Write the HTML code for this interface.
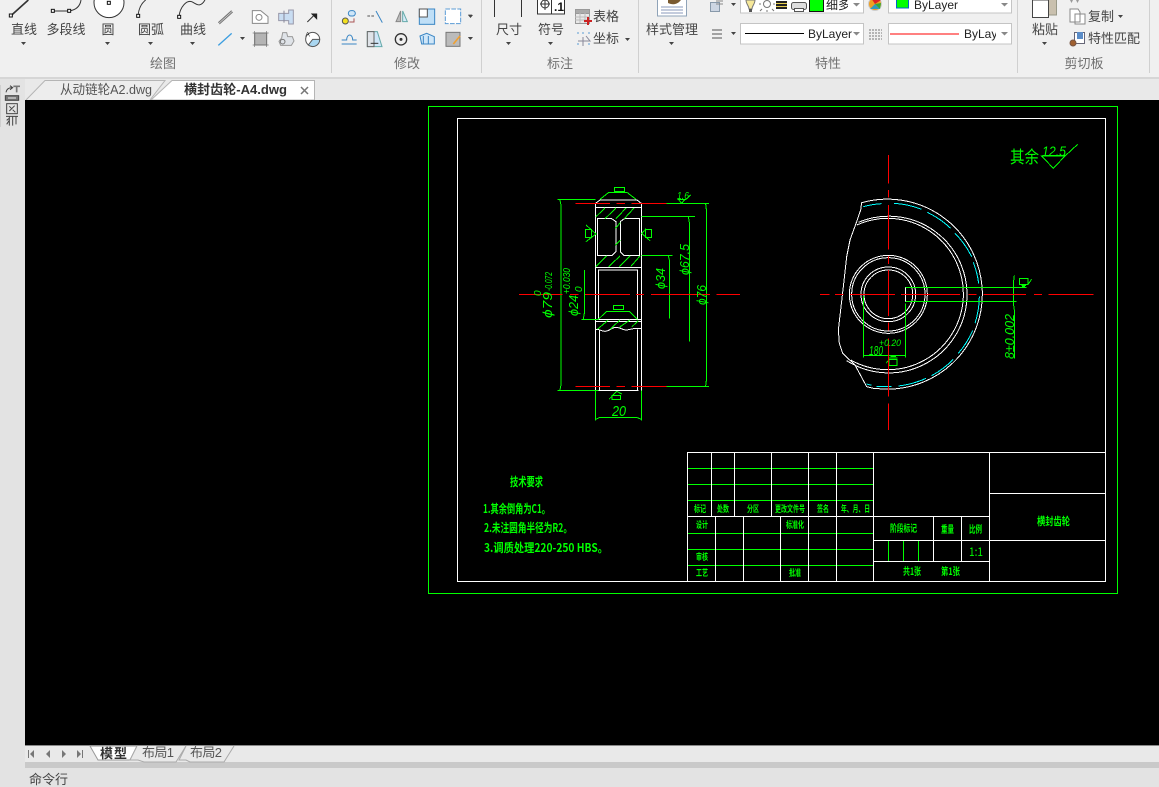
<!DOCTYPE html>
<html><head><meta charset="utf-8"><style>
html,body{margin:0;padding:0;width:1159px;height:787px;overflow:hidden;background:#e3e3e3}
svg{display:block}
text{font-family:"Liberation Sans","Noto Sans CJK SC",sans-serif}
.l{font-size:13px;fill:#444;text-anchor:middle}
.p{font-size:13px;fill:#707070;text-anchor:middle}
.c{font-size:12px;fill:#222}
.cad{font-size:9px;fill:#0f0;font-weight:bold;font-family:"Noto Sans CJK SC",sans-serif}
.t{font-size:12px;fill:#0f0;font-weight:bold;font-family:"Noto Sans CJK SC","Liberation Sans",sans-serif}
.d{font-size:13px;fill:#0f0;font-style:italic}
</style></head><body>
<svg width="1159" height="787" viewBox="0 0 1159 787" xmlns="http://www.w3.org/2000/svg">
<rect width="1159" height="787" fill="#e3e3e3"/>
<!-- ribbon -->
<rect width="1159" height="77" fill="#f0f0f0"/>
<rect y="77" width="1159" height="2" fill="#d6d6d6"/>
<rect x="25" y="79" width="1134" height="21" fill="#e9e9e9"/>
<g fill="#d0d0d0"><rect x="331" y="0" width="1" height="73"/><rect x="481" y="0" width="1" height="73"/><rect x="638" y="0" width="1" height="73"/><rect x="1017" y="0" width="1" height="73"/><rect x="1149" y="0" width="1" height="73"/></g>
<g>
<text class="l" x="24" y="34">直线</text><text class="l" x="66" y="34">多段线</text><text class="l" x="108" y="34">圆</text><text class="l" x="151" y="34">圆弧</text><text class="l" x="193" y="34">曲线</text>
<text class="l" x="509" y="34">尺寸</text><text class="l" x="551" y="34">符号</text><text class="l" x="606" y="21">表格</text><text class="l" x="606" y="43">坐标</text><text class="l" x="672" y="34">样式管理</text>
<text class="l" x="1045" y="34">粘贴</text><text class="l" x="1101" y="21">复制</text><text class="l" x="1114" y="43">特性匹配</text>
<text class="p" x="163" y="68">绘图</text><text class="p" x="407" y="68">修改</text><text class="p" x="560" y="68">标注</text><text class="p" x="828" y="68">特性</text><text class="p" x="1084" y="68">剪切板</text>
</g>
<!-- small dropdown arrows -->
<g fill="#444">
<path d="M21 42h5l-2.500 3zM105 42h5l-2.500 3zM148 42h5l-2.500 3zM190 42h5l-2.500 3zM240 37h5l-2.500 3zM468 15h5l-2.500 3zM468 37h5l-2.500 3zM506 42h5l-2.500 3zM548 42h5l-2.500 3zM625 38h5l-2.500 3zM669 42h5l-2.500 3zM731 3h5l-2.500 3zM731 32h5l-2.500 3zM1042 42h5l-2.500 3zM1118 15h5l-2.500 3z"/>
</g>
<!-- draw icons, coords 3x -->
<g transform="scale(.33333)" fill="none" stroke="#333" stroke-width="3">
<path d="M33 47L85 0" stroke-width="5"/><rect x="28" y="42" width="9" height="9" fill="#fff" stroke="#111"/>
<path d="M158 33H207M207 33C228 30 240 20 243 0"/><rect x="154" y="28" width="9" height="9" fill="#fff" stroke="#111"/><rect x="203" y="28" width="9" height="9" fill="#fff" stroke="#111"/>
<circle cx="327" cy="8" r="45" fill="#fff"/><rect x="322" y="4" width="9" height="9" fill="#fff" stroke="#111"/>
<path d="M414 47C416 28 424 10 437 0"/><rect x="410" y="43" width="9" height="9" fill="#fff" stroke="#111"/>
<path d="M537 50C540 20 560 0 575 5C590 12 600 25 615 0"/><rect x="533" y="46" width="9" height="9" fill="#fff" stroke="#111"/>
<path d="M655 68L695 32M658 72L698 36" stroke="#777" stroke-width="3.500"/>
<path d="M655 136L695 100" stroke="#3c9ee0" stroke-width="4"/>
<path d="M757 32H782L804 50V70H757Z" fill="#fff" stroke="#888"/><circle cx="777" cy="52" r="9" stroke="#888"/>
<path d="M836 40H866V30H880V72H866V62H836Z" fill="#c9ddf2" stroke="#99a"/><path d="M852 32V68" stroke="#889"/>
<path d="M922 66L940 48" stroke="#333"/><path d="M936 42H950V56Z" fill="#222" stroke="#222"/>
<rect x="764" y="99" width="36" height="36" fill="#b4b4b4" stroke="#666"/><path d="M758 99H806M758 135H806M764 93V141M800 93V141" stroke="#777" stroke-width="2"/>
<path d="M848 98h12l3 12h14l5 13-8 13H842l-5-12 8-10z" fill="#dfe3e8" stroke="#999"/><circle cx="848" cy="125" r="7" stroke="#777"/>
<circle cx="938" cy="118" r="21" fill="#fff" stroke="#555"/><path d="M938 118H959A21 21 0 0 1 925 135Z" fill="#a9d6f0" stroke="#555"/>
<text x="916" y="110" style="font-size:20px;fill:#333;stroke:none">A</text>
</g>
<!-- modify icons -->
<g transform="scale(.33333)" fill="none" stroke="#3a86c4" stroke-width="3">
<circle cx="1036" cy="63" r="9" fill="#f2e020" stroke="#555"/><rect x="1045" y="32" width="21" height="16" rx="8" fill="#cfe6f8"/><path d="M1062 55V66H1048" stroke="#a55"/>
<path d="M1102 48H1125" stroke="#555" stroke-dasharray="8 4"/><path d="M1128 33L1147 68"/>
<path d="M1188 65L1202 33V65Z" fill="#bbb" stroke="#888"/><path d="M1208 33L1222 65H1208Z" fill="#d8ebf8" stroke="#6aa"/>
<rect x="1258" y="27" width="46" height="46" fill="#bfdff7"/><rect x="1258" y="27" width="24" height="24" fill="#fff" stroke="#555"/>
<rect x="1336" y="27" width="46" height="44" fill="#fff" stroke="#5a9bd5" stroke-dasharray="14 4"/>
<path d="M1404 44h13l-6.500 7zM1404 112h13l-6.500 7z" fill="#444" stroke="none"/>
<path d="M1025 132H1070M1025 120H1040C1040 100 1058 100 1058 120H1070"/>
<path d="M1102 95H1132L1146 140H1102Z" fill="#cfe6f8" stroke="#6aa"/><path d="M1102 95H1122V140H1102Z" fill="#dfe3e8" stroke="#666"/><path d="M1112 130H1135" stroke="#333"/>
<circle cx="1203" cy="118" r="17" stroke="#333" stroke-width="4"/><circle cx="1203" cy="118" r="3" fill="#333" stroke="#333"/>
<path d="M1260 108L1280 100L1303 110V132H1265Z" fill="#cfe6f8"/><path d="M1270 108V132M1285 108V132"/>
<rect x="1338" y="97" width="42" height="42" fill="#bbb" stroke="#777"/><path d="M1360 132L1380 108" stroke="#f0a030" stroke-width="5"/>
</g>
<!-- dim / properties icons -->
<g fill="none" stroke="#333">
<path d="M494.500 0V17M521.500 0V17"/>
<rect x="537.500" y="-1" width="27" height="15" fill="#fff"/><path d="M551.500 0V14"/><circle cx="545" cy="4" r="4"/><path d="M545 0V10M540 4H550"/>
<text x="554" y="11" style="font-size:12px;font-weight:bold;fill:#111;stroke:none">.1</text>
<rect x="575.500" y="9.500" width="14" height="14" fill="#e8e8e8" stroke="#999"/><rect x="575.500" y="9.500" width="14" height="4" fill="#aaa" stroke="#999"/><path d="M575 17H590M575 20H590M580 13V23M585 13V23" stroke="#bbb"/><path d="M584 21H592M588 17V25" stroke="#c22" stroke-width="2"/>
<g stroke="#5a9bd5"><path d="M577 33h2M582 33h2M588 33h2M577 44h2M588 44h2"/><path d="M583 37V46M578 41H590L586 36" stroke="#889"/></g>
<rect x="657.500" y="-2" width="29" height="18" fill="#fff" stroke="#8fa3b8"/><path d="M661 7H683M661 10H683M661 13H683" stroke="#89b"/><path d="M668 3C672 5 677 5 681 0H668Z" fill="#7a5a30" stroke="none"/>
<rect x="710.500" y="2.500" width="9" height="9" fill="#cdd6e3" stroke="#89a"/><path d="M716 1H723M716 4H723" stroke="#888"/>
<path d="M712 30H722M712 34H722M712 38H722" stroke="#555"/>
<path d="M869 30H882M869 33H882M869 36H882M869 39H882" stroke="#777" stroke-dasharray="2 1"/>
<circle cx="875" cy="4" r="6.500" fill="#f0a020" stroke="#ccc"/><path d="M875 4L871 -2 881 0Z" fill="#d22" stroke="none"/><path d="M875 4L870 9 880 9Z" fill="#39b" stroke="none"/><path d="M875 4L881 3 880 9Z" fill="#3a3" stroke="none"/>
</g>
<g fill="#fff" stroke="#c4c4c4"><rect x="740.500" y="-3" width="123" height="16"/><rect x="888.500" y="-3" width="123" height="16"/><rect x="740.500" y="23.500" width="123" height="20.500"/><rect x="888.500" y="23.500" width="123" height="20.500"/></g>
<g>
<path d="M746 0H755C755 4 752 6 752 9H749C749 6 746 4 746 0Z" fill="#f6e89a" stroke="#777"/><rect x="749" y="9" width="3" height="3" fill="#555"/>
<circle cx="767" cy="4" r="3.500" fill="#fff" stroke="#777"/><path d="M761 4H759M775 4H773M767 10V12M762 9L760 11M772 9L774 11" stroke="#777"/>
<rect x="776" y="1" width="11" height="8" fill="#222"/><path d="M776 3.500H787M776 6.500H787" stroke="#e8d050"/>
<rect x="791.500" y="2.500" width="15" height="7" rx="2" fill="#ddd" stroke="#555"/><rect x="794.500" y="8.500" width="9" height="3" fill="#fff" stroke="#555"/>
<rect x="809.500" y="-1" width="14" height="12.500" fill="#0f0" stroke="#111"/>
<text class="c" x="826" y="9">细多</text><rect x="848" y="0" width="15" height="12" fill="#fff"/>
<rect x="896.500" y="-2" width="12" height="10" fill="#0f0" stroke="#06c"/>
<text class="c" x="914" y="9">ByLayer</text>
<path d="M745 33.500H804" stroke="#000"/><text class="c" x="808" y="38">ByLayer</text>
<path d="M890 34H959" stroke="#f00" stroke-width="1"/><text class="c" x="964" y="38">ByLayer</text><rect x="996" y="25" width="15" height="18" fill="#fff"/>
<path d="M853 3h7l-3.500 3.500zM1001 3h7l-3.500 3.500zM853 32h7l-3.500 3.500zM1001 32h7l-3.500 3.500z" fill="#888"/>
</g>
<!-- clipboard icons -->
<g stroke="#444" fill="#fff">
<rect x="1047.500" y="-1" width="9" height="16" fill="#c9c0ae" stroke="#998"/><path d="M1032.500 0V17.500H1048.500V0Z"/>
<path d="M1070 9H1078L1080 12V22H1070ZM1075 14H1085V24H1075Z" stroke="#888"/>
<rect x="1074.500" y="32.500" width="10" height="11" fill="#fff" stroke="#667"/><rect x="1077" y="32" width="6" height="7" fill="#5a8cc8" stroke="none"/><circle cx="1073" cy="43" r="3" fill="#a06030" stroke="#754"/>
<path d="M1070 0h3l-1.500 3zM1076 0h3l-1.500 3z" fill="#999" stroke="none"/>
</g>
<!-- doc tabs -->
<path d="M26 100L45 80.500H165L150 100" fill="#ededed" stroke="#b5b5b5"/>
<path d="M151 100L172 80.500H314.500V100Z" fill="#fff" stroke="#b5b5b5"/>
<text x="60" y="94" style="font-size:13px;fill:#555" textLength="92" lengthAdjust="spacingAndGlyphs">从动链轮A2.dwg</text>
<text x="184" y="94" style="font-size:13px;fill:#333;font-weight:bold" textLength="103" lengthAdjust="spacingAndGlyphs">横封齿轮-A4.dwg</text>
<path d="M301 87L308 94M308 87L301 94" stroke="#777" stroke-width="1.500"/>
<!-- side panel -->
<rect x="0" y="85" width="1" height="42" fill="#cfcfcf"/>
<g transform="translate(0,75) scale(.33333)" fill="none" stroke="#444" stroke-width="3">
<path d="M18 52C20 42 26 38 36 38M30 32L38 38 30 44"/><path d="M40 34H60M50 34V52" stroke-width="5" stroke="#777"/>
<rect x="16" y="62" width="40" height="14" fill="#777"/><path d="M24 69H48" stroke="#eee"/>
<rect x="20" y="86" width="32" height="30"/><path d="M28 108L44 92M28 94L34 100M38 104L46 112"/>
<path d="M18 124H54M28 124V152M38 124V152M48 124V148M20 136L28 130M20 148L28 136"/>
</g>
<!-- canvas -->
<rect x="25" y="100" width="1134" height="645" fill="#000"/>
<g shape-rendering="crispEdges" fill="none">
<rect x="428.500" y="106.500" width="689" height="487" stroke="#0f0"/>
<rect x="457.500" y="118.500" width="648" height="463" stroke="#fff"/>
<!-- title block -->
<g stroke="#0f0">
<path d="M688 468.500H873M688 484.500H873M688 500.500H873M688 533.500H873M688 549.500H873M688 565.500H873M888.500 540V561M903.500 540V561M918.500 540V561"/>
</g>
<g stroke="#fff">
<path d="M687.500 452.500H1105M687.500 452V581M687.500 516.500H989M711.500 452V516M734.500 452V516M771.500 452V516M808.500 452V581M836.500 452V581M873.500 452V581M715.500 516V581M743.500 516V581M780.500 516V581M989.500 452V581M989 493.500H1105M989 540.500H1105M873 540.500H989M873 561.500H989M933.500 516V561M961.500 516V561"/>
</g>
<!-- left view, 3x coords -->
<g transform="translate(510,170) scale(.33333)" stroke-width="3">
<g stroke="#fff">
<path d="M257 661V100L270 90H381L394 100V661"/>
<path d="M257 113H394M257 293H394M257 448H394M257 455H394M265 661H385"/>
<path d="M262 146H305L318 155V245L305 257H262ZM331 155L343 146H389V257H343L331 245Z"/>
<path d="M265 448V300H383V448"/>
<path d="M257 478C266 476 274 484 285 484C298 484 305 472 318 472C330 472 338 480 348 480C360 480 370 472 394 476"/>
<path d="M268 482V661M383 478V661"/>
</g>
<g stroke="#0f0">
<path d="M270 88L295 68H352L378 88"/><rect x="313" y="52" width="31" height="13"/>
<path d="M258 140L285 114M285 146L318 114M318 146L348 114M343 146L372 114M316 175L331 158M316 225L331 210M258 290L290 258M296 290L330 258M328 290L360 258M362 290L390 258"/>
<path d="M262 478L295 450M300 478L330 450M328 472L360 450M366 470L385 452"/>
<path d="M265 448L290 424H358L382 448"/><rect x="310" y="406" width="31" height="12"/>
<path d="M142 88H257M142 661H265M150 90L153 105V645L150 660"/>
<path d="M470 100H597M470 649H597M587 102L589 118V632L587 648"/>
<path d="M394 139H555M535 140L538 158V515"/>
<path d="M394 257H488M475 258L478 270V446"/>
<path d="M214 448H265M223 300V430L220 447"/>
<path d="M257 661V752M394 661V752M257 748L270 742H380L394 748"/>
<rect x="226" y="178" width="18" height="24"/><path d="M228 165L258 192 228 215"/>
<rect x="407" y="178" width="18" height="24"/><path d="M420 212L395 190 408 176"/>
<rect x="306" y="676" width="26" height="13"/><path d="M298 687L320 664 335 672"/>
<path d="M503 88H528M515 100L505 88H525ZM528 88L542 75"/>
</g>
<g stroke="#f00">
<path d="M27 373H158M180 373H205M225 373H360M378 373H402M423 373H600M620 373H690"/>
<path d="M197 100H300M320 100H345M365 100H470M197 649H300M320 649H345M365 649H470"/>
</g>
</g>
<!-- right view, 3x coords -->
<g transform="translate(820,130) scale(.33333)" stroke-width="3">
<g stroke="#fff">
<circle cx="205" cy="493" r="117"/><circle cx="205" cy="493" r="110"/><circle cx="205" cy="493" r="82"/><circle cx="205" cy="493" r="73"/>
<path d="M115 277A235 235 0 1 1 80 692"/>
<path d="M110 285A227 227 0 1 1 92 690"/>
<path d="M125 218A285 285 0 1 1 165 775H160L140 770L105 705L68 670L58 640L55 600L70 470L80 380L90 330L110 275L122 240Z"/>
<path d="M288 472H256V515H288"/>
</g>
<g stroke="#0ff" fill="none">
<path d="M130 230A272 272 0 0 1 185 221M222 220A272 272 0 0 1 305 238M322 247A272 272 0 0 1 392 295M405 310A272 272 0 0 1 455 380M460 397A272 272 0 0 1 476 460M478 500A272 272 0 0 1 465 580M458 602A272 272 0 0 1 415 670M400 688A272 272 0 0 1 335 737M318 745A272 272 0 0 1 235 768M215 770H170M155 766L140 762"/>
</g>
<g stroke="#0f0">
<path d="M256 472H620M256 514H590M583 437L580 460V520L583 540V685"/>
<path d="M131 498V682M257 520V682M131 676H257"/>
<rect x="598" y="445" width="26" height="18"/><path d="M604 467H618M606 470H615M624 463L635 448"/>
<rect x="207" y="688" width="24" height="18"/><path d="M207 684H233M212 680H228M198 700L207 690"/>
<path d="M665 78H735L700 115ZM735 78L773 43M668 76H735"/>
</g>
<g stroke="#f00">
<path d="M0 493H28M45 493H70M90 493H225M243 493H420M445 493H470M490 493H618M642 493H666M685 493H820"/>
<path d="M205 75V160M205 180V203M205 225V358M205 378V402M205 420V558M205 578V602M205 625V800M205 820V900"/>
</g>
</g>
</g>
<!-- cad text -->
<g>
<text class="t" x="1010" y="163" style="font-size:17px;font-weight:normal" textLength="29" lengthAdjust="spacingAndGlyphs">其余</text>
<text class="d" x="1042" y="156" style="font-size:14px" textLength="24" lengthAdjust="spacingAndGlyphs">12.5</text>
<text class="d" x="677" y="199" style="font-size:10px" textLength="12" lengthAdjust="spacingAndGlyphs">1.6</text>
<text class="d" x="612" y="416" style="font-size:15px" textLength="14" lengthAdjust="spacingAndGlyphs">20</text>
<text class="d" transform="translate(552,318) rotate(-90)" textLength="26" lengthAdjust="spacingAndGlyphs">ϕ79</text>
<text class="d" transform="translate(552,291) rotate(-90)" style="font-size:10px" textLength="19" lengthAdjust="spacingAndGlyphs">-0.072</text>
<text class="d" transform="translate(541,296) rotate(-90)" style="font-size:10px">0</text>
<text class="d" transform="translate(578,316) rotate(-90)" textLength="21" lengthAdjust="spacingAndGlyphs">ϕ24</text>
<text class="d" transform="translate(570,294) rotate(-90)" style="font-size:10px" textLength="26" lengthAdjust="spacingAndGlyphs">+0.030</text>
<text class="d" transform="translate(582,292) rotate(-90)" style="font-size:10px">0</text>
<text class="d" transform="translate(665,289) rotate(-90)" textLength="21" lengthAdjust="spacingAndGlyphs">ϕ34</text>
<text class="d" transform="translate(689,275) rotate(-90)" textLength="31" lengthAdjust="spacingAndGlyphs">ϕ67.5</text>
<text class="d" transform="translate(706,305) rotate(-90)" textLength="20" lengthAdjust="spacingAndGlyphs">ϕ76</text>
<text class="d" transform="translate(1014,359) rotate(-90)" textLength="45" lengthAdjust="spacingAndGlyphs">8±0.002</text>
<text class="d" x="869" y="355" textLength="14" lengthAdjust="spacingAndGlyphs">180</text>
<text class="d" x="879" y="346" style="font-size:9px" textLength="22" lengthAdjust="spacingAndGlyphs">+0.20</text>
<text class="t" x="510" y="486" textLength="33" lengthAdjust="spacingAndGlyphs">技术要求</text>
<text class="t" x="483" y="513" textLength="67" lengthAdjust="spacingAndGlyphs">1.其余倒角为C1。</text>
<text class="t" x="484" y="532" textLength="88" lengthAdjust="spacingAndGlyphs">2.未注圆角半径为R2。</text>
<text class="t" x="484" y="552" textLength="124" lengthAdjust="spacingAndGlyphs">3.调质处理220-250 HBS。</text>
<text class="cad" x="694" y="512" textLength="12" lengthAdjust="spacingAndGlyphs">标记</text>
<text class="cad" x="717" y="512" textLength="12" lengthAdjust="spacingAndGlyphs">处数</text>
<text class="cad" x="747" y="512" textLength="12" lengthAdjust="spacingAndGlyphs">分区</text>
<text class="cad" x="775" y="512" textLength="30" lengthAdjust="spacingAndGlyphs">更改文件号</text>
<text class="cad" x="817" y="512" textLength="12" lengthAdjust="spacingAndGlyphs">签名</text>
<text class="cad" x="841" y="512" textLength="29" lengthAdjust="spacingAndGlyphs">年、月、日</text>
<text class="cad" x="696" y="528" textLength="12" lengthAdjust="spacingAndGlyphs">设计</text>
<text class="cad" x="786" y="528" textLength="18" lengthAdjust="spacingAndGlyphs">标准化</text>
<text class="cad" x="696" y="560" textLength="12" lengthAdjust="spacingAndGlyphs">审核</text>
<text class="cad" x="696" y="576" textLength="12" lengthAdjust="spacingAndGlyphs">工艺</text>
<text class="cad" x="789" y="576" textLength="12" lengthAdjust="spacingAndGlyphs">批准</text>
<text class="cad" x="890" y="532" style="font-size:10px" textLength="27" lengthAdjust="spacingAndGlyphs">阶段标记</text>
<text class="cad" x="941" y="533" style="font-size:10px" textLength="13" lengthAdjust="spacingAndGlyphs">重量</text>
<text class="cad" x="969" y="533" style="font-size:10px" textLength="13" lengthAdjust="spacingAndGlyphs">比例</text>
<text class="cad" x="969" y="556" style="font-size:12px;font-weight:normal" textLength="14" lengthAdjust="spacingAndGlyphs">1:1</text>
<text class="cad" x="903" y="575" style="font-size:10px" textLength="18" lengthAdjust="spacingAndGlyphs">共1张</text>
<text class="cad" x="941" y="575" style="font-size:10px" textLength="19" lengthAdjust="spacingAndGlyphs">第1张</text>
<text class="cad" x="1037" y="525" style="font-size:11px" textLength="33" lengthAdjust="spacingAndGlyphs">横封齿轮</text>
</g>
<!-- bottom tabs -->
<rect x="25" y="745" width="1134" height="17" fill="#e9e9e9"/>
<rect x="25" y="745" width="1134" height="1" fill="#888"/>
<rect x="25" y="762" width="1134" height="6" fill="#c9c9c9"/>
<path d="M90 746L98 760H130L137 746Z" fill="#fff" stroke="#999"/>
<path d="M137 746L130 760H138L144 762H176L186 746" fill="#e9e9e9" stroke="#aaa"/>
<path d="M186 746L179 760H186L190 762H224L234 746" fill="#e9e9e9" stroke="#aaa"/>
<text x="100" y="758" style="font-size:13px;font-weight:bold;fill:#333" textLength="27">模型</text>
<text x="142" y="757" style="font-size:13px;fill:#555" textLength="32">布局1</text>
<text x="190" y="757" style="font-size:13px;fill:#555" textLength="32">布局2</text>
<g fill="#777"><path d="M28 750h1v8h-1zM34 750v8l-4-4zM50 750v8l-4-4zM62 750v8l4-4zM77 750v8l4-4zM82 750h1v8h-1z"/></g>
<text x="29" y="784" style="font-size:13px;fill:#444">命令行</text>
</svg>
</body></html>
